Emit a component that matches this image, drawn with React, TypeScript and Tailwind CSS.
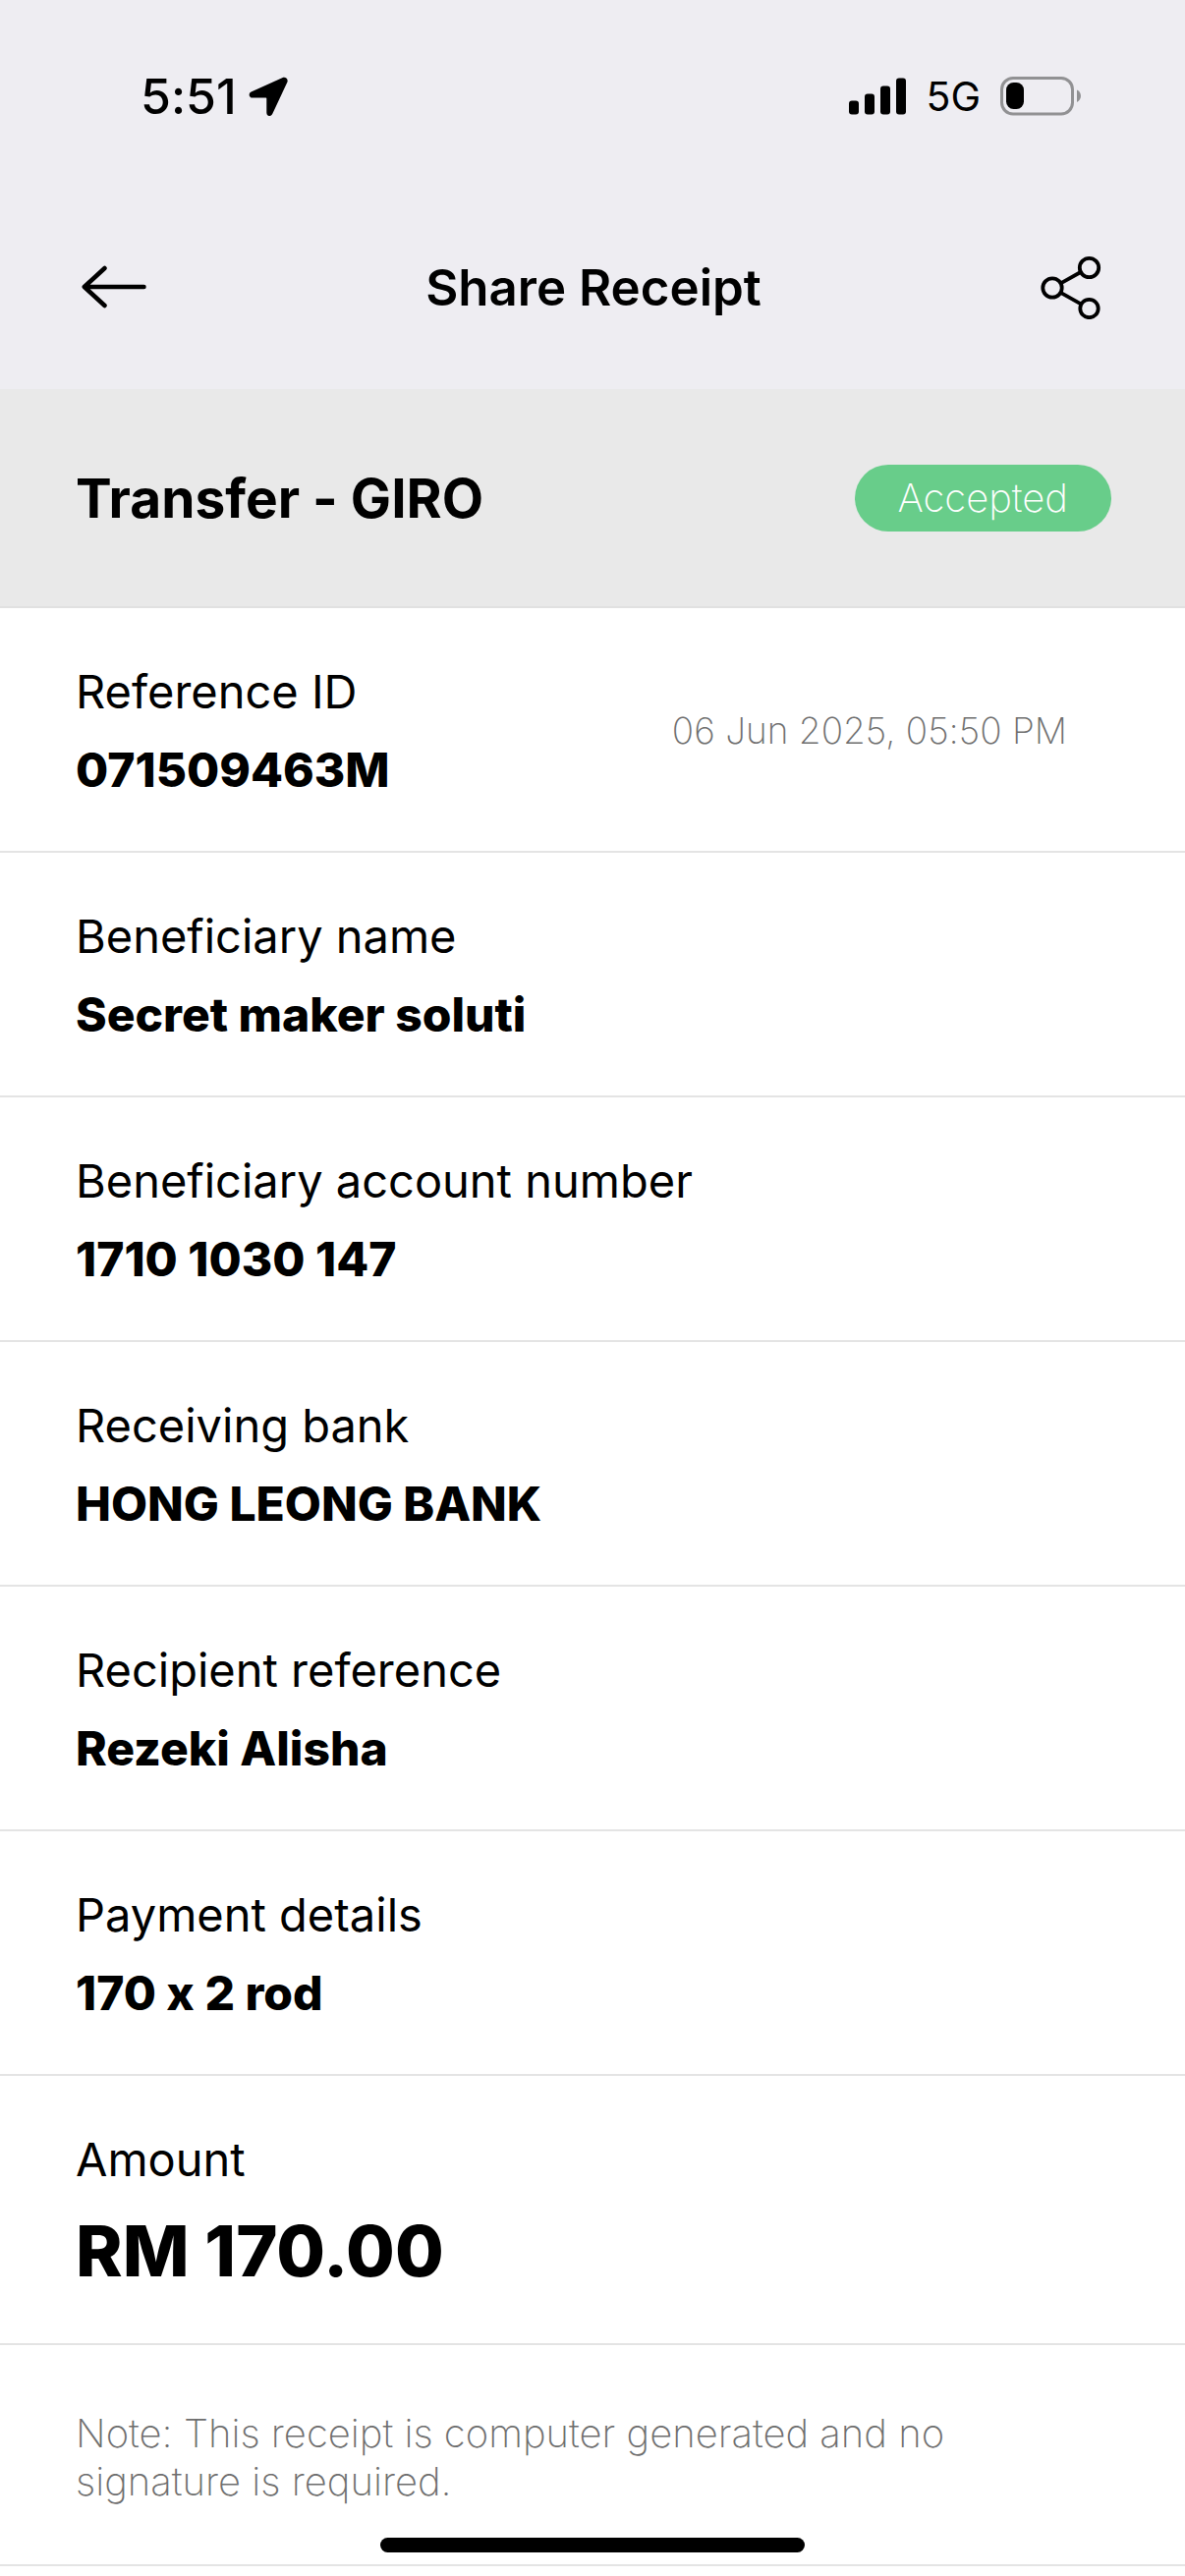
type Detail = {
  label: string;
  value: string;
  date?: string;
};

const details: Detail[] = [
  { label: "Reference ID", value: "071509463M", date: "06 Jun 2025, 05:50 PM" },
  { label: "Beneficiary name", value: "Secret maker soluti" },
  { label: "Beneficiary account number", value: "1710 1030 147" },
  { label: "Receiving bank", value: "HONG LEONG BANK" },
  { label: "Recipient reference", value: "Rezeki Alisha" },
  { label: "Payment details", value: "170 x 2 rod" },
];

function LocationIcon() {
  return (
    <svg width="40" height="40" viewBox="0 0 40 40" aria-hidden="true">
      <path
        d="M34.2 1.2 2.600 15.4C-.4 16.8.1 21.600 4 21.600h13.600c.4 0 .7.3.7.7v14.200c0 4.200 4.300 4.700 5.900 1.500L39.200 6.100c1.700-3.500-1.500-6.500-5-4.900Z"
        fill="black"
      />
    </svg>
  );
}

function SignalIcon() {
  return (
    <svg width="58" height="38" viewBox="0 0 58 38" aria-hidden="true" fill="black">
      <rect x="0" y="23.500" width="10" height="14" rx="3" />
      <rect x="16" y="16.500" width="10" height="21" rx="3" />
      <rect x="32" y="8.500" width="10" height="29" rx="3" />
      <rect x="48" y="0.500" width="10" height="37" rx="3" />
    </svg>
  );
}

function BatteryIcon() {
  return (
    <svg width="83" height="40" viewBox="0 0 83 40" aria-hidden="true">
      <rect x="1.500" y="1.500" width="72" height="36.500" rx="11.500" fill="none" stroke="#919193" strokeWidth="3" />
      <rect x="6" y="6" width="18" height="27" rx="7.500" fill="black" />
      <path d="M78 13.500c5.300 2.400 5.300 10 0 12.400Z" fill="#919193" />
    </svg>
  );
}

function BackIcon() {
  return (
    <svg width="66" height="44" viewBox="0 0 66 44" fill="none" stroke="black" strokeWidth="4.500" strokeLinecap="round" strokeLinejoin="round" aria-hidden="true">
      <path d="M23.500 3 2.800 22 23.500 41M3 22h60.500" />
    </svg>
  );
}

function ShareIcon() {
  return (
    <svg width="62" height="66" viewBox="0 0 62 66" fill="none" stroke="black" strokeWidth="3.800" aria-hidden="true">
      <circle cx="12" cy="34" r="9.700" />
      <circle cx="49.500" cy="13.500" r="9.700" />
      <circle cx="49.500" cy="55" r="9.200" />
      <path d="m20.500 29.300 20.300-11.300M20.500 38.900 41 50.300" />
    </svg>
  );
}

export default function App() {
  return (
    <div className="relative min-h-screen bg-white font-['Inter',sans-serif] text-black [font-feature-settings:'calt'_0]">
      <header className="bg-[#eeedf2] pb-2">
        <div className="flex h-[196px] items-center justify-between pl-[143px] pr-[105px]">
          <div className="flex items-center gap-3">
            <span className="text-[50px] leading-none font-medium">5:51</span>
            <LocationIcon />
          </div>
          <div className="flex items-center gap-5">
            <SignalIcon />
            <span className="text-[41px] leading-none">5G</span>
            <BatteryIcon />
          </div>
        </div>
        <div className="flex h-48 items-center justify-between pl-[83px] pr-[85px]">
          <button type="button" aria-label="Back">
            <BackIcon />
          </button>
          <h1 className="text-[51px] leading-none font-semibold">Share Receipt</h1>
          <button type="button" aria-label="Share">
            <ShareIcon />
          </button>
        </div>
      </header>

      <main>
        <section className="flex items-center justify-between border-b-2 border-[#e1e1e1] bg-[#e9e9e9] pt-[77px] pb-[76px] pl-[77px] pr-[75px]">
          <h2 className="text-[55px] leading-none font-bold">Transfer - GIRO</h2>
          <span className="rounded-full bg-[#68cd8a] px-11 text-[40px] leading-[68px] font-extralight text-white">
            Accepted
          </span>
        </section>

        <dl>
          {details.map(({ label, value, date }) => (
            <div
              key={label}
              className="flex items-center justify-between border-b-2 border-[#e4e4e4] pt-[45px] pb-[42px] pl-[77px] pr-[120px]"
            >
              <div>
                <dt className="text-[47px] leading-[80px]">{label}</dt>
                <dd className="text-[48px] leading-[80px] font-extrabold">{value}</dd>
              </div>
              {date && <dd className="text-[37px] font-extralight text-[#6e6e6e]">{date}</dd>}
            </div>
          ))}
          <div className="border-b-2 border-[#e4e4e4] px-[77px] pt-[45px] pb-[42px]">
            <dt className="text-[47px] leading-[80px]">Amount</dt>
            <dd className="text-[72px] leading-[105px] font-extrabold">RM 170.00</dd>
          </div>
        </dl>

        <p className="border-b-2 border-[#e4e4e4] px-[77px] pt-[65px] pb-[60px] text-[40px] leading-[49px] font-extralight text-[#6e6e6e]">
          <span className="block max-w-[960px]">
            Note: This receipt is computer generated and no signature is required.
          </span>
        </p>
      </main>

      <div className="absolute bottom-6 left-1/2 h-[15px] w-[432px] -translate-x-1/2 rounded-full bg-black" />
    </div>
  );
}
